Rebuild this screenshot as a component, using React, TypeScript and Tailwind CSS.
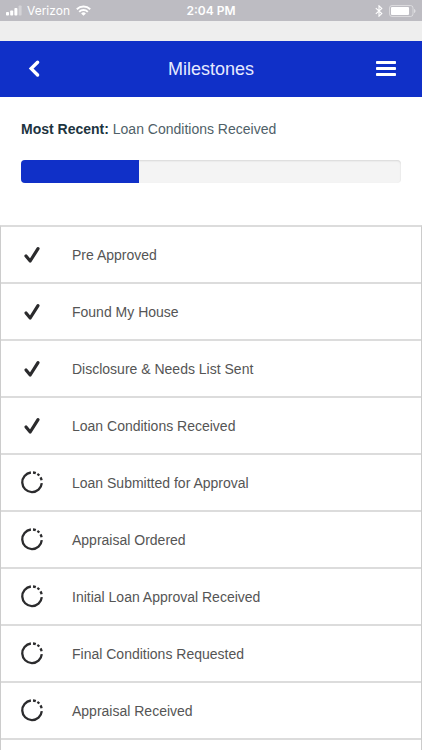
type Milestone = {
  label: string;
  done: boolean;
};

const MILESTONES: Milestone[] = [
  { label: 'Pre Approved', done: true },
  { label: 'Found My House', done: true },
  { label: 'Disclosure & Needs List Sent', done: true },
  { label: 'Loan Conditions Received', done: true },
  { label: 'Loan Submitted for Approval', done: false },
  { label: 'Appraisal Ordered', done: false },
  { label: 'Initial Loan Approval Received', done: false },
  { label: 'Final Conditions Requested', done: false },
  { label: 'Appraisal Received', done: false },
];

const PROGRESS = 31;

function SignalIcon() {
  return (
    <svg width="17" height="11" viewBox="0 0 17 11" fill="white" aria-hidden="true">
      <rect x="0" y="7" width="3" height="3.5" rx="0.8" />
      <rect x="4.2" y="5.5" width="3" height="5" rx="0.8" />
      <rect x="8.4" y="3" width="3" height="7.5" rx="0.8" />
      <rect x="12.6" y="0.5" width="3" height="10" rx="0.8" opacity="0.35" />
    </svg>
  );
}

function WifiIcon() {
  return (
    <svg width="15" height="11" viewBox="0 0 15 11" fill="none" stroke="white" strokeWidth="1.9" aria-hidden="true">
      <path d="M0.8 4.2a9.6 9.6 0 0 1 13.4 0" />
      <path d="M3.2 6.8a6.1 6.1 0 0 1 8.6 0" />
      <path d="M7.5 10.8 5.1 8.4a3.4 3.4 0 0 1 4.8 0z" fill="white" stroke="none" />
    </svg>
  );
}

function BluetoothIcon() {
  return (
    <svg width="8" height="12" viewBox="0 0 8 12" fill="none" stroke="white" strokeWidth="1.1" aria-hidden="true">
      <path d="M0.8 3.2 6.8 8.6 4 11.2V0.8l2.8 2.6-6 5.4" />
    </svg>
  );
}

function BatteryIcon() {
  return (
    <svg width="27" height="12" viewBox="0 0 27 12" aria-hidden="true">
      <rect x="0.5" y="0.5" width="23.5" height="11" rx="2.5" fill="none" stroke="white" strokeOpacity="0.45" />
      <rect x="2" y="2" width="18" height="8" rx="1" fill="white" />
      <path d="M25 4v4c1-.3 1.5-1 1.5-2S26 4.3 25 4z" fill="white" opacity="0.5" />
    </svg>
  );
}

function CheckIcon() {
  return (
    <svg width="24" height="24" viewBox="0 0 24 24" fill="none" stroke="#2b2b2d" strokeWidth="3.2" strokeLinecap="round" strokeLinejoin="round" aria-hidden="true">
      <path d="M6 13 10.2 18 18 5.6" />
    </svg>
  );
}

// Ring left open at the top right, where three short dashes close it
function PendingIcon() {
  return (
    <svg width="24" height="24" viewBox="0 0 24 24" fill="none" stroke="#2b2b2d" strokeWidth="2.3" aria-hidden="true">
      <path d="M21.8 12.2A9.8 9.8 0 1 1 10.9 1.5" />
      <path d="M13 1.5a9.8 9.8 0 0 1 2.8.6" />
      <path d="M17.4 2.9a9.8 9.8 0 0 1 1.9 1.7" />
      <path d="M20.5 6.4a9.8 9.8 0 0 1 1.1 2.8" />
    </svg>
  );
}

function StatusBar() {
  return (
    <div className="grid h-[21px] shrink-0 grid-cols-3 items-center bg-[#bdbcc2] px-1.5 font-[Inter,sans-serif] text-white">
      <div className="flex items-center">
        <SignalIcon />
        <span className="ml-1 mr-1.5 text-xs">Verizon</span>
        <WifiIcon />
      </div>
      <span className="text-center text-xs font-semibold">2:04 PM</span>
      <div className="flex items-center justify-end gap-1.5">
        <BluetoothIcon />
        <BatteryIcon />
      </div>
    </div>
  );
}

function Header() {
  return (
    <header className="flex h-14 shrink-0 items-center justify-between bg-[#1030c8] px-6 text-white">
      <button type="button" aria-label="Back" className="flex w-6">
        <svg width="20" height="20" viewBox="0 0 20 20" fill="none" stroke="white" strokeWidth="3.4" strokeLinecap="round" aria-hidden="true">
          <path d="M13.600 3.200 7.200 9.600 13.600 16" />
        </svg>
      </button>
      <h1 className="text-lg text-[#e6eaff]">Milestones</h1>
      <button type="button" aria-label="Menu" className="flex w-6 justify-center">
        <svg width="22" height="16" viewBox="0 0 22 16" fill="white" aria-hidden="true">
          <rect x="1" y="0" width="20" height="3" rx="0.8" />
          <rect x="1" y="6" width="20" height="3" rx="0.8" />
          <rect x="1" y="12" width="20" height="3" rx="0.8" />
        </svg>
      </button>
    </header>
  );
}

export default function App() {
  const mostRecent = MILESTONES.filter((m) => m.done).at(-1);

  return (
    <div className="flex h-dvh flex-col overflow-hidden bg-white font-['Liberation_Sans',Arial,sans-serif]">
      <StatusBar />
      <div className="h-5 shrink-0 bg-[#eeeeee]" />
      <Header />

      <section className="shrink-0 px-[21px] pt-[22px] pb-[42px]">
        <p className="text-sm leading-5 text-[#4f5f68]">
          <strong className="font-bold text-[#1d3440]">Most Recent:</strong> {mostRecent?.label}
        </p>
        <div
          role="progressbar"
          aria-label="Loan progress"
          aria-valuenow={PROGRESS}
          aria-valuemin={0}
          aria-valuemax={100}
          className="mt-[21px] h-[23px] overflow-hidden rounded bg-[#f4f4f4] shadow-[inset_0_1px_2px_rgba(0,0,0,0.12)]"
        >
          <div className="h-full bg-[#1030c8]" style={{ width: `${PROGRESS}%` }} />
        </div>
      </section>

      <ul className="grow overflow-hidden border-x border-t-2 border-x-[#cccccc] border-t-[#dcdcdc]">
        {MILESTONES.map((m) => (
          <li key={m.label} className="flex h-[57px] items-center gap-7 border-b-2 border-[#dcdcdc] pl-[19px]">
            {m.done ? <CheckIcon /> : <PendingIcon />}
            <span className="text-sm text-[#555555]">{m.label}</span>
          </li>
        ))}
      </ul>
    </div>
  );
}
